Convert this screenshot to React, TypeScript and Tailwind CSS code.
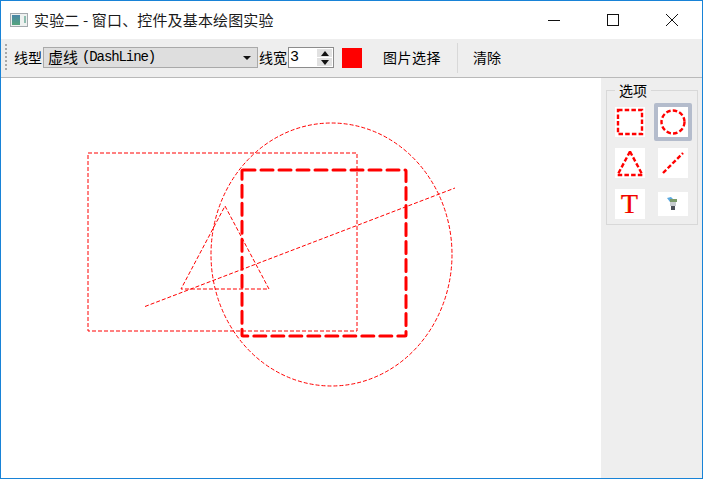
const cjk = { fontFamily: '"Noto Sans CJK SC", sans-serif' };
const mono = { fontFamily: '"Liberation Mono", monospace' };

function Tile({ selected, children }: { selected?: boolean; children: React.ReactNode }) {
  return (
    <div className="flex items-center justify-center">
      <div className={selected ? "flex h-[38px] w-[38px] items-center justify-center rounded-[2px] border-4 border-[#b4bccc] bg-white" : "flex h-[30px] w-[30px] items-center justify-center bg-white"}>
        {children}
      </div>
    </div>
  );
}

function Icon({ children }: { children: React.ReactNode }) {
  return (
    <svg width="30" height="30" viewBox="0 0 30 30" fill="none" stroke="#ff0000" strokeWidth="2.4" strokeDasharray="4.5 2.2" className="block">
      {children}
    </svg>
  );
}

export default function App() {
  return (
    <div className="flex h-[479px] w-[703px] flex-col overflow-hidden border border-[#1883d7] bg-white text-black" style={cjk}>
      <header className="flex h-[38px] shrink-0 items-center bg-white">
        <svg width="18" height="14" viewBox="0 0 18 14" className="ml-[9px] block">
          <defs>
            <linearGradient id="g" x1="0" y1="0" x2="0" y2="1">
              <stop offset="0" stopColor="#4a86a8" />
              <stop offset="1" stopColor="#55a57c" />
            </linearGradient>
          </defs>
          <rect x="0.5" y="0.5" width="17" height="13" fill="#eef1f0" stroke="#a4a9ae" />
          <rect x="2" y="2" width="8" height="10" fill="url(#g)" />
          <rect x="14" y="3" width="2" height="7" fill="#8fbdb0" />
        </svg>
        <span className="-mt-[2px] ml-[6px] whitespace-nowrap text-[15px] leading-none tracking-[0.15px] text-[#1a1a1a]">实验二 - 窗口、控件及基本绘图实验</span>
        <div className="ml-auto flex pr-[1px]">
          {[
            <path key="a" d="M0 6.5H12" />,
            <rect key="b" x="0.5" y="0.5" width="11" height="11" />,
            <path key="c" d="M0 0L12 12M12 0L0 12" />,
          ].map((p, i) => (
            <div key={i} className="flex h-[38px] w-[59px] items-center justify-center">
              <svg width="12" height="12" viewBox="0 0 12 12" fill="none" stroke="#111" strokeWidth="1" className="block">{p}</svg>
            </div>
          ))}
        </div>
      </header>

      <div className="flex h-[39px] shrink-0 items-center border-b border-[#b9b9b9] bg-[#eeeeee] pb-[1px] text-[14px] leading-none">
        <div className="ml-[4px] mr-[7px] h-[28px] w-[2px] bg-[repeating-linear-gradient(to_bottom,#a8a8a8_0,#a8a8a8_2px,transparent_2px,transparent_4px)]" />
        <span className="-mt-[2px] w-[29px]">线型</span>
        <div className="flex h-[21px] w-[215px] items-center justify-between border border-[#a9a9a9] bg-[#dedede] pl-[4px] pr-[6px]">
          <span className="-mt-[2px] flex items-center text-[15px]">虚线<span style={mono} className="ml-[4px] text-[14px] tracking-[-1.1px]">(DashLine)</span></span>
          <svg width="8" height="4" viewBox="0 0 8 4" className="block"><path d="M0 0H8L4 4Z" fill="#111" /></svg>
        </div>
        <span className="-mt-[2px] ml-[1px] w-[29px]">线宽</span>
        <div className="flex h-[21px] w-[46px] items-center justify-between border border-[#8c8c8c] bg-white pl-[1px] pr-[1px]">
          <span className="text-[15px]" style={mono}>3</span>
          <div className="flex h-[17px] w-[15px] flex-col gap-[1px]">
            <div className="flex flex-1 items-center justify-center bg-[#e1e1e1]"><svg width="8" height="5" viewBox="0 0 8 5" className="block"><path d="M0 5H8L4 0Z" fill="#111" /></svg></div>
            <div className="flex flex-1 items-center justify-center bg-[#e1e1e1]"><svg width="8" height="5" viewBox="0 0 8 5" className="block"><path d="M0 0H8L4 5Z" fill="#111" /></svg></div>
          </div>
        </div>
        <div className="ml-[8px] h-[20px] w-[20px] bg-[#ff0000]" />
        <span className="-mt-[2px] ml-[21px] w-[60px] whitespace-nowrap tracking-[0.5px]">图片选择</span>
        <div className="ml-[14px] h-[30px] w-[1px] bg-[#d8d8d8]" />
        <span className="-mt-[2px] ml-[15px]">清除</span>
      </div>

      <div className="flex min-h-0 flex-1">
        <main className="min-w-0 flex-1 bg-white">
          <svg width="600" height="400" viewBox="1 78 600 400" fill="none" stroke="#ff0000" className="block">
            <rect x="88" y="153" width="269" height="178" strokeWidth="1" strokeDasharray="4 2" />
            <ellipse cx="331.5" cy="254.5" rx="120.5" ry="131.5" strokeWidth="1" strokeDasharray="4 2" />
            <path d="M225 206L269 289H181Z" strokeWidth="1" strokeDasharray="4 2" />
            <path d="M145 306.5L455 188" strokeWidth="1" strokeDasharray="4 2" />
            <rect x="242" y="170" width="164" height="166" rx="1" strokeWidth="3" strokeDasharray="12 6" strokeLinecap="round" strokeLinejoin="round" />
          </svg>
        </main>
        <aside className="w-[101px] shrink-0 bg-[#eeeeee] pl-[5px] pt-[12px]">
          <div className="relative h-[135px] w-[92px] border border-[#d8d8d8] pl-[1px] pt-[10px]">
            <span className="absolute left-[8px] top-[-10px] bg-[#eeeeee] px-[4px] text-[14px] leading-[18px]">选项</span>
            <div className="grid grid-cols-[43px_43px] auto-rows-[41px]">
              <Tile>
                <Icon><rect x="3" y="3" width="24" height="24" /></Icon>
              </Tile>
              <Tile selected>
                <Icon><circle cx="15" cy="15" r="11.5" /></Icon>
              </Tile>
              <Tile>
                <Icon><path d="M15 3.5L27.5 27H2.5Z" /></Icon>
              </Tile>
              <Tile>
                <Icon><path d="M5 25L25 5" /></Icon>
              </Tile>
              <Tile>
                <span className="text-[28px] leading-none text-[#f20000] [text-shadow:-0.5px_0_0_#f0a040]" style={{ fontFamily: '"Liberation Serif", serif' }}>T</span>
              </Tile>
              <div className="flex items-center justify-center">
                <div className="flex h-[24px] w-[30px] items-center justify-center bg-white">
                  <svg width="12" height="14" viewBox="0 0 12 14" className="block">
                    <path d="M0 1L4 0L6 2L3 5Z" fill="#5aa9e0" />
                    <rect x="3" y="2" width="7" height="3" fill="#7a9a6a" />
                    <rect x="3" y="5" width="6" height="4" fill="#c8ccd0" />
                    <rect x="4" y="9" width="4" height="4" fill="#4b4f58" />
                  </svg>
                </div>
              </div>
            </div>
          </div>
        </aside>
      </div>
    </div>
  );
}
